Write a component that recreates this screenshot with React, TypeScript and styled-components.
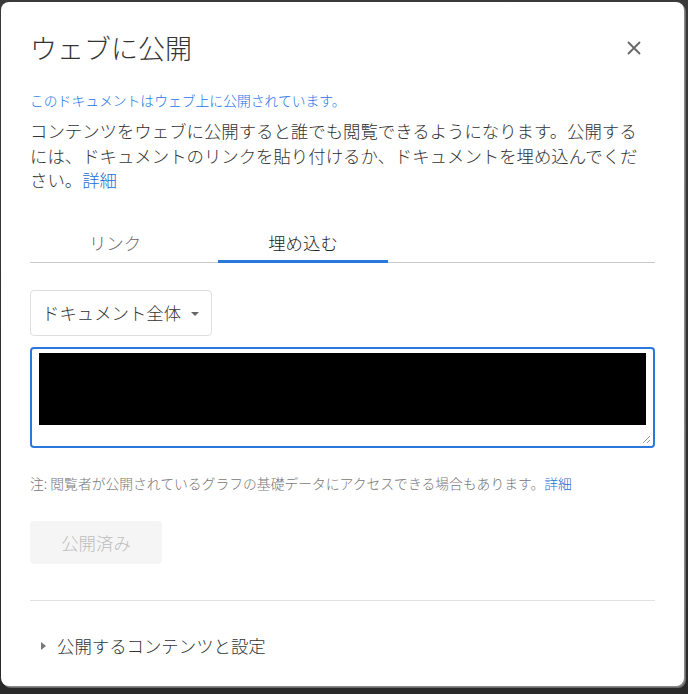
import React from "react";
import styled, { createGlobalStyle } from "styled-components";

const Global = createGlobalStyle`
  html, body { margin: 0; padding: 0; }
  body {
    background: #2e2e2e;
    font-family: "Noto Sans CJK JP", "Noto Sans", sans-serif;
    font-weight: 300;
    -webkit-font-smoothing: antialiased;
  }
`;

const Frame = styled.div`
  width: 688px;
  height: 694px;
  box-sizing: border-box;
  padding: 2px 4px 8px 1px;
  background: linear-gradient(#3a3a3a, #2a2a2a);
`;

const Dialog = styled.div`
  height: 100%;
  box-sizing: border-box;
  background: #fff;
  border-radius: 8px;
  box-shadow: 1px 1px 0 #8a8a8a, 2px 2px 0 #6a6a6a;
  padding: 30px 29px 0 29px;
  display: flex;
  flex-direction: column;
`;

const Header = styled.div`
  display: flex;
  align-items: center;
  justify-content: space-between;
  height: 32px;
`;

const Title = styled.h1`
  margin: 0;
  font-size: 27px;
  font-weight: 300;
  line-height: 32px;
  color: #333;
`;

const Close = styled.button`
  border: 0;
  background: transparent;
  padding: 0;
  margin-right: 14px;
  width: 14px;
  height: 14px;
  display: flex;
  cursor: pointer;
`;

const Notice = styled.div`
  margin-top: 26px;
  font-size: 13.8px;
  line-height: 20px;
  color: #1a73e8;
`;

const Para = styled.p`
  margin: 9px 0 0;
  max-width: 616px;
  font-size: 17.4px;
  line-height: 24.5px;
  color: #333;
`;

const Link = styled.a`
  color: #1a6dd0;
  text-decoration: none;
`;

const TabBar = styled.div`
  margin-top: 30px;
  display: flex;
  gap: 18px;
  border-bottom: 1px solid #c8c8c8;
`;

const Tab = styled.div<{ $active?: boolean }>`
  position: relative;
  width: 170px;
  height: 39px;
  display: flex;
  align-items: center;
  justify-content: center;
  font-size: 17.4px;
  color: ${(p) => (p.$active ? "#222" : "#666")};
  &::after {
    content: "";
    display: ${(p) => (p.$active ? "block" : "none")};
    position: absolute;
    left: 0;
    right: 0;
    bottom: -1px;
    height: 3px;
    background: #2a78dc;
  }
`;

const Select = styled.div`
  margin-top: 27px;
  width: 182px;
  height: 46px;
  box-sizing: border-box;
  border: 1px solid #dedede;
  border-radius: 4px;
  display: flex;
  align-items: center;
  padding-left: 11px;
  font-size: 17.4px;
  color: #333;
`;

const Caret = styled.span`
  margin-left: 10px;
  margin-top: 2px;
  width: 0;
  height: 0;
  border-left: 4px solid transparent;
  border-right: 4px solid transparent;
  border-top: 4px solid #666;
`;

const CodeBox = styled.div`
  position: relative;
  margin-top: 11px;
  height: 101px;
  box-sizing: border-box;
  border: 2px solid #2a78dc;
  border-radius: 4px;
  padding: 4px 7px 0 7px;
`;

const Redacted = styled.div`
  height: 72px;
  background: #000;
`;

const Grip = styled.svg`
  position: absolute;
  right: 2px;
  bottom: 2px;
`;

const Note = styled.div`
  margin-top: 25px;
  font-size: 13.8px;
  line-height: 20px;
  color: #777;
`;

const Published = styled.button`
  margin-top: 28px;
  width: 132px;
  height: 43px;
  border: 0;
  border-radius: 4px;
  background: #f5f5f5;
  color: #bdbdbd;
  font-family: inherit;
  font-weight: 300;
  font-size: 17.4px;
  padding: 0;
`;

const Divider = styled.hr`
  margin: 36px 0 0;
  border: 0;
  border-top: 1px solid #e2e2e2;
`;

const Expander = styled.div`
  margin-top: 33px;
  display: flex;
  align-items: center;
  font-size: 17.4px;
  line-height: 24px;
  color: #333;
`;

const Arrow = styled.span`
  margin-left: 11px;
  margin-right: 11px;
  width: 0;
  height: 0;
  border-top: 4px solid transparent;
  border-bottom: 4px solid transparent;
  border-left: 5px solid #777;
`;

export default function App() {
  return (
    <>
      <Global />
      <Frame>
        <Dialog>
          <Header>
            <Title>ウェブに公開</Title>
            <Close aria-label="閉じる">
              <svg width="14" height="14" viewBox="0 0 14 14">
                <path d="M1 1L13 13M13 1L1 13" stroke="#666" strokeWidth="1.8" />
              </svg>
            </Close>
          </Header>
          <Notice>このドキュメントはウェブ上に公開されています。</Notice>
          <Para>
            コンテンツをウェブに公開すると誰でも閲覧できるようになります。公開するには、ドキュメントのリンクを貼り付けるか、ドキュメントを埋め込んでください。
            <Link>詳細</Link>
          </Para>
          <TabBar>
            <Tab>リンク</Tab>
            <Tab $active>埋め込む</Tab>
          </TabBar>
          <Select>
            ドキュメント全体
            <Caret />
          </Select>
          <CodeBox>
            <Redacted />
            <Grip width="10" height="10" viewBox="0 0 10 10">
              <path d="M9 2L2 9M9 6L6 9" stroke="#999" strokeWidth="1" />
            </Grip>
          </CodeBox>
          <Note>
            注: 閲覧者が公開されているグラフの基礎データにアクセスできる場合もあります。<Link>詳細</Link>
          </Note>
          <div>
            <Published disabled>公開済み</Published>
          </div>
          <Divider />
          <Expander>
            <Arrow />
            公開するコンテンツと設定
          </Expander>
        </Dialog>
      </Frame>
    </>
  );
}
